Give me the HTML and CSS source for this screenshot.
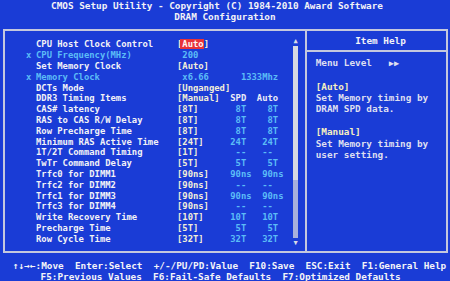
FILE: index.html
```html
<!DOCTYPE html>
<html lang="en">
<head>
  <meta charset="UTF-8" />
  <meta name="viewport" content="width=device-width, initial-scale=1.0"/>
  <title>DRAM Configuration</title>
  <link rel="stylesheet" href="styles.css">
</head>
<body>
  <header class="title">
    <div class="title-main">CMOS Setup Utility - Copyright (C) 1984-2010 Award Software</div>
    <div class="title-sub">DRAM Configuration</div>
  </header>

  <div class="frame">
    <div class="items">
      <div class="list">
        <div class="row"><span class="mark"></span><span class="label">CPU Host Clock Control</span><span class="val">[<span class="sel">Auto</span>]</span></div>
        <div class="row dim"><span class="mark">x</span><span class="label">CPU Frequency(MHz)</span><span class="val"> 200</span></div>
        <div class="row"><span class="mark"></span><span class="label">Set Memory Clock</span><span class="val">[Auto]</span></div>
        <div class="row dim"><span class="mark">x</span><span class="label">Memory Clock</span><span class="val"> x6.66</span><span class="spd">  1333Mhz</span></div>
        <div class="row"><span class="mark"></span><span class="label">DCTs Mode</span><span class="val">[Unganged]</span></div>
        <div class="row head"><span class="mark"></span><span class="label">DDR3 Timing Items</span><span class="val">[Manual]</span><span class="spd">SPD</span><span class="auto">Auto</span></div>
        <div class="row"><span class="mark"></span><span class="label">CAS# latency</span><span class="val">[8T]</span><span class="spd"> 8T</span><span class="auto">  8T</span></div>
        <div class="row"><span class="mark"></span><span class="label">RAS to CAS R/W Delay</span><span class="val">[8T]</span><span class="spd"> 8T</span><span class="auto">  8T</span></div>
        <div class="row"><span class="mark"></span><span class="label">Row Precharge Time</span><span class="val">[8T]</span><span class="spd"> 8T</span><span class="auto">  8T</span></div>
        <div class="row"><span class="mark"></span><span class="label">Minimum RAS Active Time</span><span class="val">[24T]</span><span class="spd">24T</span><span class="auto"> 24T</span></div>
        <div class="row"><span class="mark"></span><span class="label">1T/2T Command Timing</span><span class="val">[1T]</span><span class="spd"> --</span><span class="auto"> --</span></div>
        <div class="row"><span class="mark"></span><span class="label">TwTr Command Delay</span><span class="val">[5T]</span><span class="spd"> 5T</span><span class="auto">  5T</span></div>
        <div class="row"><span class="mark"></span><span class="label">Trfc0 for DIMM1</span><span class="val">[90ns]</span><span class="spd">90ns</span><span class="auto"> 90ns</span></div>
        <div class="row"><span class="mark"></span><span class="label">Trfc2 for DIMM2</span><span class="val">[90ns]</span><span class="spd"> --</span><span class="auto"> --</span></div>
        <div class="row"><span class="mark"></span><span class="label">Trfc1 for DIMM3</span><span class="val">[90ns]</span><span class="spd">90ns</span><span class="auto"> 90ns</span></div>
        <div class="row"><span class="mark"></span><span class="label">Trfc3 for DIMM4</span><span class="val">[90ns]</span><span class="spd"> --</span><span class="auto"> --</span></div>
        <div class="row"><span class="mark"></span><span class="label">Write Recovery Time</span><span class="val">[10T]</span><span class="spd">10T</span><span class="auto"> 10T</span></div>
        <div class="row"><span class="mark"></span><span class="label">Precharge Time</span><span class="val">[5T]</span><span class="spd"> 5T</span><span class="auto">  5T</span></div>
        <div class="row"><span class="mark"></span><span class="label">Row Cycle Time</span><span class="val">[32T]</span><span class="spd">32T</span><span class="auto"> 32T</span></div>
      </div>

      <div class="scroll">
        <div class="arrow">&#9650;</div>
        <div class="track"><div class="thumb"></div></div>
        <div class="arrow">&#9660;</div>
      </div>
    </div>

    <div class="help">
      <div class="help-title">Item Help</div>
      <div class="help-body">
        <div>Menu Level   <span class="level">&#9654;&#9654;</span></div>
        <div>&nbsp;</div>
        <div class="opt">[Auto]</div>
        <div>Set Memory timing by</div>
        <div>DRAM SPD data.</div>
        <div>&nbsp;</div>
        <div class="opt">[Manual]</div>
        <div>Set Memory timing by</div>
        <div>user setting.</div>
      </div>
    </div>
  </div>

  <footer class="keys">
    <div class="keys-1">&#8593;&#8595;&#8594;&#8592;:Move  Enter:Select  +/-/PU/PD:Value  F10:Save  ESC:Exit  F1:General Help</div>
    <div class="keys-2">F5:Previous Values  F6:Fail-Safe Defaults  F7:Optimized Defaults</div>
  </footer>
</body>
</html>
```

FILE: styles.css
```css
body {
  margin: 0;
  padding: 0;
  background-color: #1a3cd6;
  color: #f2f2f6;
  font-family: 'DejaVu Sans Mono', 'Liberation Mono', monospace;
  font-size: 9.35px;
  font-weight: bold;
  overflow: hidden;
}

.title {
  line-height: 11.3px;
}

.title-main {
  padding-left: 51px;
  white-space: pre;
}

.title-sub {
  text-align: center;
  white-space: pre;
}

.frame {
  display: grid;
  grid-template-columns: 1fr 139px;
  height: 220px;
  margin: 6px 2px 0 3px;
  border: 2px solid #c4c8de;
}

.items {
  display: flex;
  border-right: 2px solid #c4c8de;
}

.list {
  flex: 1;
  padding: 8.8px 0 0 21px;
  font-size: 8.86px;
  line-height: 10.8px;
}

.row {
  display: flex;
}

.row span {
  white-space: pre;
}

.mark {
  width: 10px;
  flex: none;
}

.label {
  width: 141px;
  flex: none;
}

.val {
  width: 10ch;
  flex: none;
  color: #f2eed8;
}

.spd {
  width: 5ch;
  flex: none;
  color: #5cbcf6;
}

.auto {
  color: #5cbcf6;
}

.row.head .spd,
.row.head .auto {
  color: #ecebf6;
}

.row.dim,
.row.dim .val {
  color: #5cbcf6;
}

.sel {
  background-color: #e8333a;
  color: #fff4f4;
  padding-left: 2px;
  margin-left: -2px;
}

.scroll {
  display: flex;
  flex-direction: column;
  width: 7px;
  margin: 5px 6px 3px 0;
  color: #d8dae6;
  font-size: 7px;
}

.arrow {
  height: 10px;
  line-height: 10px;
  text-align: center;
}

.track {
  flex: 1;
  margin: 0 1px;
  background-color: #a8b0dc;
}

.thumb {
  height: 134px;
  background-color: #d6d8e2;
}

.help {
  color: #dedff0;
}

.help-title {
  padding: 4px 0 4.6px 8px;
  line-height: 11.2px;
  text-align: center;
  border-bottom: 2px solid #c4c8de;
  color: #f2f2f8;
}

.help-body {
  padding: 4.4px 0 0 8.7px;
  line-height: 11.4px;
}

.help-body div {
  white-space: pre;
}

.level {
  font-size: 8.5px;
}

.opt {
  color: #f6efc0;
}

.keys {
  margin-top: 7px;
  line-height: 11.3px;
  color: #f4f4f8;
}

.keys div {
  white-space: pre;
}

.keys-1 {
  padding-left: 13px;
}

.keys-2 {
  padding-left: 40.5px;
}
```
